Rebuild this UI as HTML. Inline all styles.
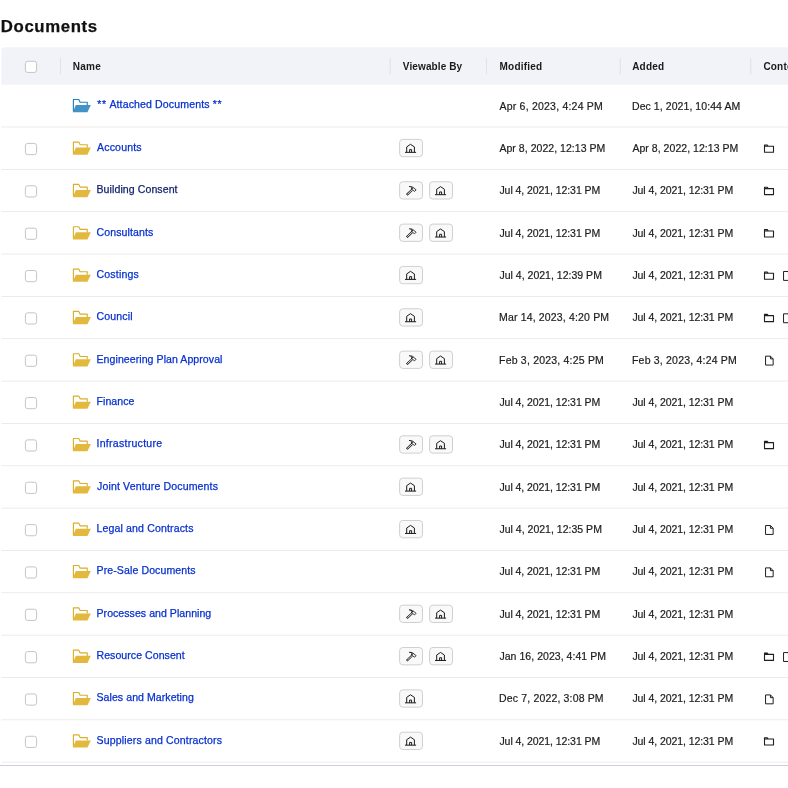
<!DOCTYPE html>
<html><head><meta charset="utf-8"><title>Documents</title>
<style>
html,body{margin:0;padding:0;background:#fff;}
body{width:788px;height:788px;overflow:hidden;position:relative;font-family:"Liberation Sans",Arial,sans-serif;color:#1c1c1c;}
svg.g{position:absolute;left:0;top:0;}
.t{position:absolute;left:0;top:0;width:788px;height:788px;will-change:transform;}
h1{position:absolute;left:0.8px;top:17px;margin:0;font-size:16.8px;line-height:20px;font-weight:bold;letter-spacing:.62px;-webkit-text-stroke:.25px #111;color:#111;}
.h{position:absolute;top:46.6px;line-height:40px;height:40px;font-size:10px;font-weight:bold;letter-spacing:.2px;color:#1a1a1a;white-space:nowrap;}
.n,.d{position:absolute;height:26px;line-height:26px;white-space:nowrap;}
.n{font-size:10.55px;color:#0730cf;-webkit-text-stroke:.25px #0730cf;text-decoration:none;}
.n b{font-weight:normal;letter-spacing:.75px;}
.d{font-size:10.5px;color:#1c1c1c;-webkit-text-stroke:.2px #1c1c1c;}
</style></head><body>
<svg class="g" width="788" height="788" viewBox="0 0 788 788">
<defs>
<g id="fob"><path d="M0.65 12.6V0.65h5.4l1.35 2.7h7.1v3" fill="none" stroke="#2480be" stroke-width="1.15" stroke-linejoin="round"/><path d="M3.1 6.2h15l-3.4 7.2H0z" fill="#4292c7"/></g>
<g id="foy"><path d="M0.65 12.6V0.65h5.4l1.35 2.7h7.1v3" fill="none" stroke="#dcae2b" stroke-width="1.15" stroke-linejoin="round"/><path d="M3.1 6.2h15l-3.4 7.2H0z" fill="#e2b93d"/></g>
<g id="cb"><rect x="0.4" y="0.4" width="11.2" height="11.2" rx="2.3" fill="#fff" stroke="#c2c2c2" stroke-width="0.95"/></g>
<g id="bg"><rect x="0.4" y="0.4" width="22.9" height="17.3" rx="3.2" fill="#f9f9f9" stroke="#cbcbcb" stroke-width="0.9"/></g>
<g id="house"><use href="#bg"/><path d="M7.5 13.3V7.9L11.3 5.3L15.2 7.9v5.4M5.8 13.35h11.1M10.4 13.3v-2.7h2v2.7" fill="none" stroke="#1a1a1a" stroke-width="1" stroke-linejoin="round"/></g>
<g id="hammer"><use href="#bg"/><path d="M10.3 5.1l2.7.55M12.9 5.7l-.5 2.6" fill="none" stroke="#1a1a1a" stroke-width="1.1" stroke-linecap="round"/><path d="M13.8 6.1l3.1 2.4-1.5 1.6-3-2.2z" fill="none" stroke="#1a1a1a" stroke-width=".85" stroke-linejoin="round"/><path d="M12.7 8.7L7.55 13.55" stroke="#1a1a1a" stroke-width="2.15"/><path d="M12.75 8.65L8.15 12.98" stroke="#f9f9f9" stroke-width=".95"/></g>
<g id="fold"><path d="M0.6 7.9V0.6h2.8l.9 1.3h5.3v6z M0.6 1.9h4" fill="none" stroke="#1f1f1f" stroke-width="1.1" stroke-linejoin="round"/></g>
<g id="doc"><path d="M0.55 0.55h4.9l2.7 2.7v6.2H0.55z M5.45 0.55v2.7h2.7" fill="none" stroke="#1f1f1f" stroke-width="1.0" stroke-linejoin="round"/></g>
</defs>
<path d="M4.4 47.2H788V84.75H1.4V50.2a3 3 0 0 1 3-3z" fill="#f2f3f9"/>
<rect x="60.10" y="58" width="0.8" height="16.2" fill="#dcdde3"/>
<rect x="389.80" y="58" width="0.8" height="16.2" fill="#dcdde3"/>
<rect x="486.20" y="58" width="0.8" height="16.2" fill="#dcdde3"/>
<rect x="619.80" y="58" width="0.8" height="16.2" fill="#dcdde3"/>
<rect x="750.40" y="58" width="0.8" height="16.2" fill="#dcdde3"/>
<use href="#cb" x="25" y="60.85"/>
<rect x="1.4" y="126.625" width="790" height="0.75" fill="#e5e5e5"/>
<use href="#fob" x="72.75" y="98.85"/>
<rect x="1.4" y="168.970" width="790" height="0.75" fill="#e5e5e5"/>
<use href="#cb" x="25" y="143.04"/>
<use href="#foy" x="72.75" y="141.40"/>
<use href="#house" x="399.20" y="139.00"/>
<use href="#fold" x="763.90" y="144.34"/>
<rect x="1.4" y="211.315" width="790" height="0.75" fill="#e5e5e5"/>
<use href="#cb" x="25" y="185.39"/>
<use href="#foy" x="72.75" y="183.74"/>
<use href="#hammer" x="399.20" y="181.34"/>
<use href="#house" x="429.20" y="181.34"/>
<use href="#fold" x="763.90" y="186.69"/>
<rect x="1.4" y="253.660" width="790" height="0.75" fill="#e5e5e5"/>
<use href="#cb" x="25" y="227.73"/>
<use href="#foy" x="72.75" y="226.09"/>
<use href="#hammer" x="399.20" y="223.69"/>
<use href="#house" x="429.20" y="223.69"/>
<use href="#fold" x="763.90" y="229.03"/>
<rect x="1.4" y="296.005" width="790" height="0.75" fill="#e5e5e5"/>
<use href="#cb" x="25" y="270.08"/>
<use href="#foy" x="72.75" y="268.43"/>
<use href="#house" x="399.20" y="266.03"/>
<use href="#fold" x="763.90" y="271.38"/>
<use href="#doc" x="783.00" y="270.93"/>
<rect x="1.4" y="338.350" width="790" height="0.75" fill="#e5e5e5"/>
<use href="#cb" x="25" y="312.43"/>
<use href="#foy" x="72.75" y="310.78"/>
<use href="#house" x="399.20" y="308.38"/>
<use href="#fold" x="763.90" y="313.73"/>
<use href="#doc" x="783.00" y="313.28"/>
<rect x="1.4" y="380.695" width="790" height="0.75" fill="#e5e5e5"/>
<use href="#cb" x="25" y="354.77"/>
<use href="#foy" x="72.75" y="353.12"/>
<use href="#hammer" x="399.20" y="350.72"/>
<use href="#house" x="429.20" y="350.72"/>
<use href="#doc" x="765.00" y="355.62"/>
<rect x="1.4" y="423.040" width="790" height="0.75" fill="#e5e5e5"/>
<use href="#cb" x="25" y="397.11"/>
<use href="#foy" x="72.75" y="395.46"/>
<rect x="1.4" y="465.385" width="790" height="0.75" fill="#e5e5e5"/>
<use href="#cb" x="25" y="439.46"/>
<use href="#foy" x="72.75" y="437.81"/>
<use href="#hammer" x="399.20" y="435.41"/>
<use href="#house" x="429.20" y="435.41"/>
<use href="#fold" x="763.90" y="440.76"/>
<rect x="1.4" y="507.730" width="790" height="0.75" fill="#e5e5e5"/>
<use href="#cb" x="25" y="481.81"/>
<use href="#foy" x="72.75" y="480.16"/>
<use href="#house" x="399.20" y="477.75"/>
<rect x="1.4" y="550.075" width="790" height="0.75" fill="#e5e5e5"/>
<use href="#cb" x="25" y="524.15"/>
<use href="#foy" x="72.75" y="522.50"/>
<use href="#house" x="399.20" y="520.10"/>
<use href="#doc" x="765.00" y="525.00"/>
<rect x="1.4" y="592.420" width="790" height="0.75" fill="#e5e5e5"/>
<use href="#cb" x="25" y="566.50"/>
<use href="#foy" x="72.75" y="564.84"/>
<use href="#doc" x="765.00" y="567.34"/>
<rect x="1.4" y="634.765" width="790" height="0.75" fill="#e5e5e5"/>
<use href="#cb" x="25" y="608.84"/>
<use href="#foy" x="72.75" y="607.19"/>
<use href="#hammer" x="399.20" y="604.79"/>
<use href="#house" x="429.20" y="604.79"/>
<rect x="1.4" y="677.110" width="790" height="0.75" fill="#e5e5e5"/>
<use href="#cb" x="25" y="651.19"/>
<use href="#foy" x="72.75" y="649.53"/>
<use href="#hammer" x="399.20" y="647.13"/>
<use href="#house" x="429.20" y="647.13"/>
<use href="#fold" x="763.90" y="652.49"/>
<use href="#doc" x="783.00" y="652.03"/>
<rect x="1.4" y="719.455" width="790" height="0.75" fill="#e5e5e5"/>
<use href="#cb" x="25" y="693.53"/>
<use href="#foy" x="72.75" y="691.88"/>
<use href="#house" x="399.20" y="689.48"/>
<use href="#doc" x="765.00" y="694.38"/>
<rect x="1.4" y="761.800" width="790" height="0.75" fill="#e5e5e5"/>
<use href="#cb" x="25" y="735.88"/>
<use href="#foy" x="72.75" y="734.22"/>
<use href="#house" x="399.20" y="731.82"/>
<use href="#fold" x="763.90" y="737.17"/>
<rect x="0" y="765" width="788" height="1" fill="#cbd1dc"/>
</svg>
<div class="t"><h1>Documents</h1>
<span class="h" style="left:72.7px;letter-spacing:.3px">Name</span>
<span class="h" style="left:402.8px;letter-spacing:.12px">Viewable By</span>
<span class="h" style="left:499.6px">Modified</span>
<span class="h" style="left:632.2px">Added</span>
<span class="h" style="left:763.4px">Contents</span>
<a class="n" style="left:97.20px;top:91px;letter-spacing:0.13px"><b>**</b> Attached Documents <b>**</b></a><span class="d" style="left:499.45px;top:93px;letter-spacing:0.22px">Apr 6, 2023, 4:24 PM</span><span class="d" style="left:632.00px;top:93px;letter-spacing:0.07px">Dec 1, 2021, 10:44 AM</span>
<a class="n" style="left:97.00px;top:134px;letter-spacing:0.171px">Accounts</a><span class="d" style="left:499.45px;top:135px;letter-spacing:0.042px">Apr 8, 2022, 12:13 PM</span><span class="d" style="left:632.40px;top:135px;letter-spacing:0.042px">Apr 8, 2022, 12:13 PM</span>
<a class="n" style="left:96.50px;top:176px;letter-spacing:0.087px;color:#0d1f6b;-webkit-text-stroke-color:#0d1f6b">Building Consent</a><span class="d" style="left:499.45px;top:177px;letter-spacing:-0.07px">Jul 4, 2021, 12:31 PM</span><span class="d" style="left:632.40px;top:177px;letter-spacing:-0.07px">Jul 4, 2021, 12:31 PM</span>
<a class="n" style="left:96.50px;top:219px;letter-spacing:0.12px">Consultants</a><span class="d" style="left:499.45px;top:220px;letter-spacing:-0.07px">Jul 4, 2021, 12:31 PM</span><span class="d" style="left:632.40px;top:220px;letter-spacing:-0.07px">Jul 4, 2021, 12:31 PM</span>
<a class="n" style="left:96.50px;top:261px;letter-spacing:0.185px">Costings</a><span class="d" style="left:499.45px;top:262px;letter-spacing:0.015px">Jul 4, 2021, 12:39 PM</span><span class="d" style="left:632.40px;top:262px;letter-spacing:-0.07px">Jul 4, 2021, 12:31 PM</span>
<a class="n" style="left:96.50px;top:303px;letter-spacing:0.133px">Council</a><span class="d" style="left:499.05px;top:304px;letter-spacing:0.16px">Mar 14, 2023, 4:20 PM</span><span class="d" style="left:632.40px;top:304px;letter-spacing:-0.07px">Jul 4, 2021, 12:31 PM</span>
<a class="n" style="left:96.50px;top:346px;letter-spacing:0.067px">Engineering Plan Approval</a><span class="d" style="left:499.05px;top:347px;letter-spacing:0.2px">Feb 3, 2023, 4:25 PM</span><span class="d" style="left:632.00px;top:347px;letter-spacing:0.2px">Feb 3, 2023, 4:24 PM</span>
<a class="n" style="left:96.50px;top:388px;letter-spacing:0.05px">Finance</a><span class="d" style="left:499.45px;top:389px;letter-spacing:-0.07px">Jul 4, 2021, 12:31 PM</span><span class="d" style="left:632.40px;top:389px;letter-spacing:-0.07px">Jul 4, 2021, 12:31 PM</span>
<a class="n" style="left:96.50px;top:430px;letter-spacing:0.269px">Infrastructure</a><span class="d" style="left:499.45px;top:431px;letter-spacing:-0.07px">Jul 4, 2021, 12:31 PM</span><span class="d" style="left:632.40px;top:431px;letter-spacing:-0.07px">Jul 4, 2021, 12:31 PM</span>
<a class="n" style="left:97.00px;top:473px;letter-spacing:0.141px">Joint Venture Documents</a><span class="d" style="left:499.45px;top:474px;letter-spacing:-0.07px">Jul 4, 2021, 12:31 PM</span><span class="d" style="left:632.40px;top:474px;letter-spacing:-0.07px">Jul 4, 2021, 12:31 PM</span>
<a class="n" style="left:96.50px;top:515px;letter-spacing:0.139px">Legal and Contracts</a><span class="d" style="left:499.45px;top:516px;letter-spacing:0.015px">Jul 4, 2021, 12:35 PM</span><span class="d" style="left:632.40px;top:516px;letter-spacing:-0.07px">Jul 4, 2021, 12:31 PM</span>
<a class="n" style="left:96.50px;top:557px;letter-spacing:0.106px">Pre-Sale Documents</a><span class="d" style="left:499.45px;top:558px;letter-spacing:-0.07px">Jul 4, 2021, 12:31 PM</span><span class="d" style="left:632.40px;top:558px;letter-spacing:-0.07px">Jul 4, 2021, 12:31 PM</span>
<a class="n" style="left:96.50px;top:600px;letter-spacing:0.047px">Processes and Planning</a><span class="d" style="left:499.45px;top:601px;letter-spacing:-0.07px">Jul 4, 2021, 12:31 PM</span><span class="d" style="left:632.40px;top:601px;letter-spacing:-0.07px">Jul 4, 2021, 12:31 PM</span>
<a class="n" style="left:96.50px;top:642px;letter-spacing:0.053px">Resource Consent</a><span class="d" style="left:499.45px;top:643px;letter-spacing:0.045px">Jan 16, 2023, 4:41 PM</span><span class="d" style="left:632.40px;top:643px;letter-spacing:-0.07px">Jul 4, 2021, 12:31 PM</span>
<a class="n" style="left:96.50px;top:684px;letter-spacing:0.064px">Sales and Marketing</a><span class="d" style="left:499.05px;top:685px;letter-spacing:0.158px">Dec 7, 2022, 3:08 PM</span><span class="d" style="left:632.40px;top:685px;letter-spacing:-0.07px">Jul 4, 2021, 12:31 PM</span>
<a class="n" style="left:96.50px;top:727px;letter-spacing:0.15px">Suppliers and Contractors</a><span class="d" style="left:499.45px;top:728px;letter-spacing:-0.07px">Jul 4, 2021, 12:31 PM</span><span class="d" style="left:632.40px;top:728px;letter-spacing:-0.07px">Jul 4, 2021, 12:31 PM</span>
</div>
</body></html>
